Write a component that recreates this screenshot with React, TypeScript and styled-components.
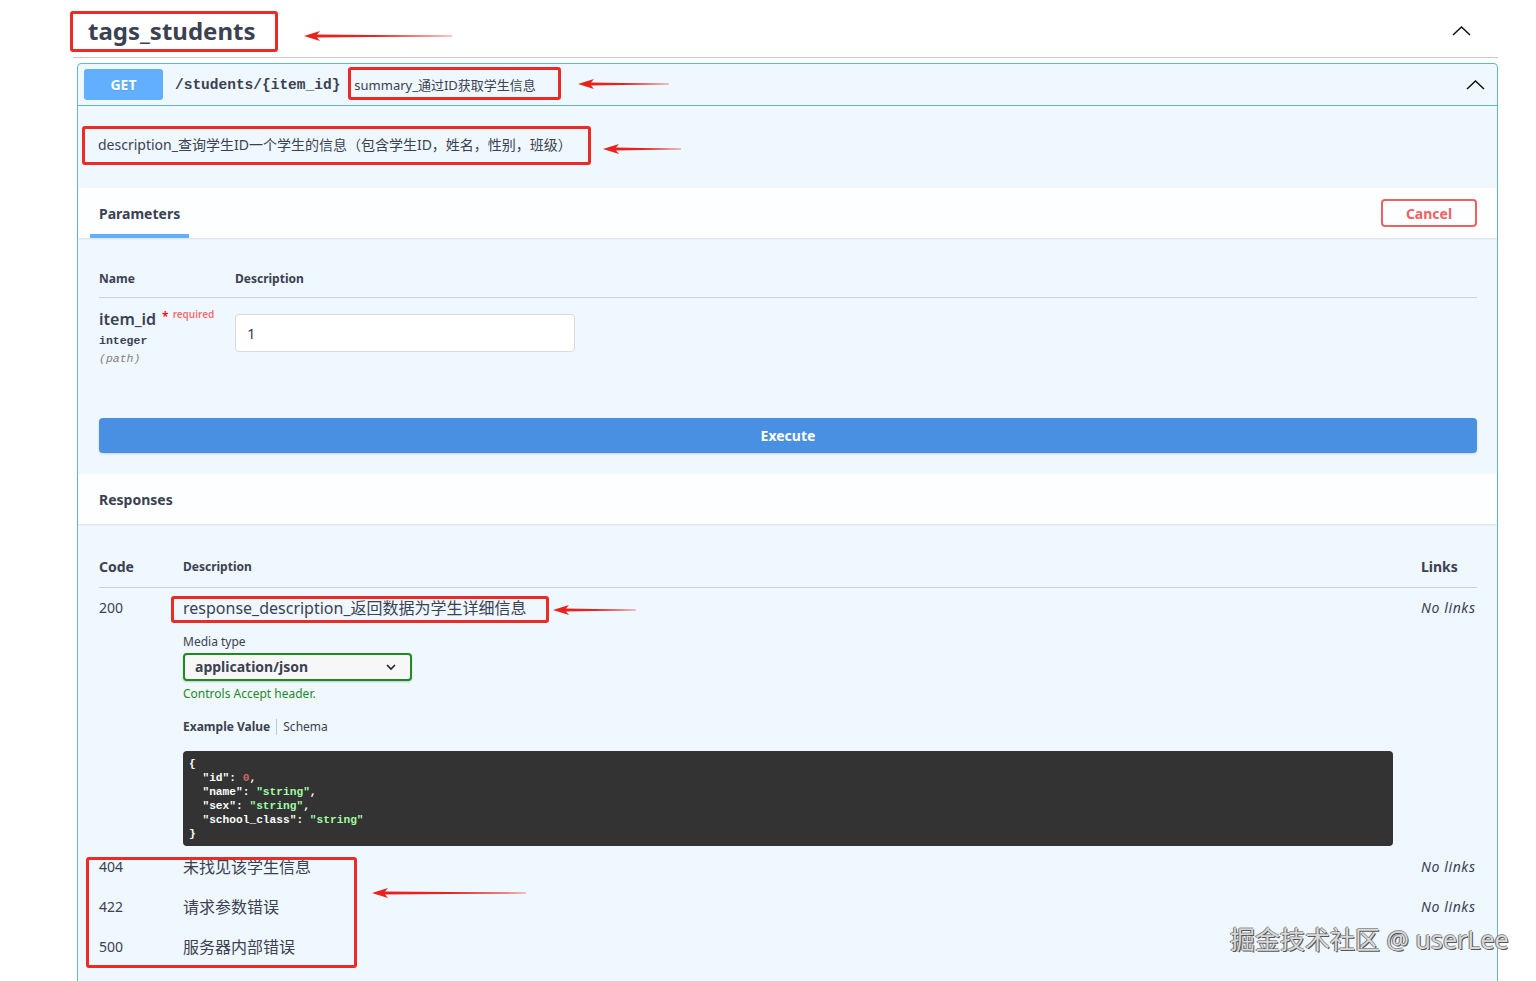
import React from 'react';
import styled, { createGlobalStyle } from 'styled-components';

const GlobalStyle = createGlobalStyle`
  * { box-sizing: border-box; }
  html, body { margin: 0; padding: 0; background: #fff; }
  body {
    font-family: 'Noto Sans', 'Noto Sans CJK SC', sans-serif;
    color: #3b4151;
  }
`;

const mono = `'Liberation Mono', 'DejaVu Sans Mono', monospace`;

const Page = styled.div`
  position: relative;
  min-height: 981px;
  overflow: hidden;
`;

const TagSection = styled.section`
  width: 1425px;
  margin-left: 73px;
`;

const TagHeader = styled.div`
  height: 58px;
  padding: 5px 27px 0 15px;
  display: flex;
  align-items: center;
  justify-content: space-between;
  border-bottom: 1px solid rgba(59, 65, 81, 0.3);
`;

const TagTitle = styled.h3`
  margin: 0;
  font-size: 24px;
  line-height: 32px;
  font-weight: 700;
  color: #3b4151;
`;

const OpBlock = styled.div`
  margin: 5px 0 0 4px;
  border: 1px solid #61affe;
  border-radius: 4px;
  background: #eff7ff;
`;

const Summary = styled.div`
  height: 42px;
  padding: 5px 12px 5px 6px;
  display: flex;
  align-items: center;
  border-bottom: 1px solid #61affe;
`;

const Method = styled.span`
  width: 79px;
  height: 31px;
  border-radius: 3px;
  background: #61affe;
  color: #fff;
  font-size: 14px;
  font-weight: 700;
  display: flex;
  align-items: center;
  justify-content: center;
  text-shadow: 0 1px 0 rgba(0, 0, 0, 0.1);
`;

const Path = styled.span`
  margin-left: 12px;
  font-family: ${mono};
  font-size: 14.5px;
  font-weight: 700;
  color: #3b4151;
`;

const SummaryText = styled.span`
  margin-left: 14px;
  font-size: 13px;
  color: #3b4151;
`;

const ChevronSvg = styled.svg`
  margin-left: auto;
  display: block;
`;

const Chevron = ({ size = 17 }: { size?: number }) => (
  <ChevronSvg width={size + 2} height={10} viewBox={`0 0 ${size + 2} 10`}>
    <polyline points={`1,9 ${(size + 2) / 2},1 ${size + 1},9`} fill="none" stroke="#111" strokeWidth="1.5" />
  </ChevronSvg>
);

const Description = styled.div`
  height: 82px;
  padding: 29px 20px 0;
  font-size: 14px;
  line-height: 20px;
`;

const SectionHeader = styled.div<{ $pl: number }>`
  height: 50px;
  padding: 0 20px 0 ${({ $pl }) => $pl}px;
  display: flex;
  align-items: center;
  justify-content: space-between;
  background: rgba(255, 255, 255, 0.8);
  box-shadow: 0 1px 2px rgba(0, 0, 0, 0.1);
`;

const Tab = styled.div`
  height: 50px;
  padding: 4px 9px 0;
  display: flex;
  align-items: center;
  border-bottom: 4px solid #61affe;
  font-size: 14px;
  font-weight: 700;
`;

const SectionTitle = styled.h4`
  margin: 0;
  font-size: 14px;
  font-weight: 700;
`;

const CancelButton = styled.button`
  width: 96px;
  height: 28px;
  border: 2px solid #f06262;
  border-radius: 4px;
  background: transparent;
  color: #f06262;
  font-family: inherit;
  font-size: 14px;
  font-weight: 700;
  padding: 0;
`;

const SectionBody = styled.div<{ $pb?: number }>`
  padding: 21px 20px ${({ $pb = 0 }) => $pb}px 21px;
`;

const ParamHeadRow = styled.div`
  display: grid;
  grid-template-columns: 136px 1fr;
  padding: 12px 0 11px;
  border-bottom: 1px solid rgba(59, 65, 81, 0.2);
  font-size: 12px;
  line-height: 15px;
  font-weight: 700;
`;

const ParamRow = styled.div`
  display: grid;
  grid-template-columns: 136px 1fr;
  padding: 10px 0;
`;

const ParamName = styled.div`
  font-size: 16px;
  line-height: 22px;
  font-weight: 600;
  white-space: nowrap;
`;

const Required = styled.span`
  color: #f00;
  font-size: 12px;
  margin-left: 6px;
  position: relative;
  top: -4px;
`;

const RequiredLabel = styled.span`
  color: rgba(255, 0, 0, 0.6);
  font-size: 10px;
  font-weight: 600;
  margin-left: 4px;
  position: relative;
  top: -7px;
`;

const ParamType = styled.div<{ $muted?: boolean }>`
  font-family: ${mono};
  font-size: 11.5px;
  line-height: 18px;
  font-weight: ${({ $muted }) => ($muted ? 400 : 700)};
  font-style: ${({ $muted }) => ($muted ? 'italic' : 'normal')};
  color: ${({ $muted }) => ($muted ? '#808080' : '#3b4151')};
`;

const ValueInput = styled.input`
  width: 340px;
  height: 38px;
  margin: 6px 0;
  padding: 0 11px;
  border: 1px solid #d9d9d9;
  border-radius: 4px;
  background: #fff;
  font-family: inherit;
  font-size: 15px;
  color: #3b4151;
`;

const ExecuteWrap = styled.div`
  padding: 40px 20px 21px 21px;
`;

const ExecuteButton = styled.button`
  width: 100%;
  height: 35px;
  border: none;
  border-radius: 4px;
  background: #4990e2;
  color: #fff;
  font-family: inherit;
  font-size: 14px;
  font-weight: 700;
  box-shadow: 0 1px 2px rgba(0, 0, 0, 0.15);
`;

const RespGrid = styled.div<{ $head?: boolean; $pb?: number }>`
  display: grid;
  grid-template-columns: 84px 1fr 56px;
  padding: ${({ $head, $pb = 10 }) => ($head ? '13px 0 11px' : `10px 0 ${$pb}px`)};
  border-bottom: ${({ $head }) => ($head ? '1px solid rgba(59, 65, 81, 0.2)' : 'none')};
  align-items: ${({ $head }) => ($head ? 'center' : 'start')};
`;

const HeadCell = styled.div<{ $small?: boolean }>`
  font-size: ${({ $small }) => ($small ? 12 : 14)}px;
  line-height: 18px;
  font-weight: 700;
`;

const CodeCell = styled.div`
  font-size: 14px;
  line-height: 20px;
`;

const DescCell = styled.div`
  font-size: 16px;
  line-height: 20px;
  min-width: 0;
`;

const NoLinks = styled.div`
  font-size: 14px;
  line-height: 20px;
  font-style: italic;
  letter-spacing: 0.6px;
  white-space: nowrap;
`;

const SmallLabel = styled.div`
  margin-top: 16px;
  font-size: 12px;
  line-height: 16px;
`;

const MediaSelect = styled.div`
  width: 229px;
  height: 28px;
  margin-top: 3px;
  padding: 0 14px 0 10px;
  display: flex;
  align-items: center;
  justify-content: space-between;
  border: 2px solid #1f8a1f;
  border-radius: 4px;
  background: #f7f7f7;
  box-shadow: 0 1px 2px rgba(0, 0, 0, 0.2);
  font-size: 14px;
  font-weight: 700;
  color: #3b4151;
`;

const AcceptNote = styled.div`
  margin-top: 5px;
  font-size: 12px;
  line-height: 16px;
  color: #1f8a1f;
`;

const ExampleTabs = styled.div`
  margin-top: 17px;
  display: flex;
  align-items: center;
  font-size: 12px;
  line-height: 16px;
`;

const ExampleTab = styled.span<{ $active?: boolean }>`
  font-weight: ${({ $active }) => ($active ? 700 : 400)};
  padding: 0 6px 0 0;
  & + & {
    padding-left: 6px;
    border-left: 1px solid rgba(0, 0, 0, 0.2);
  }
`;

const CodeBlock = styled.pre`
  margin: 16px 28px 0 0;
  padding: 6px 6px 5px;
  background: #333;
  border-radius: 4px;
  color: #fff;
  font-family: ${mono};
  font-size: 11.2px;
  line-height: 14px;
  font-weight: 700;
  white-space: pre;
`;

const Num = styled.span`
  color: #d36363;
`;

const Str = styled.span`
  color: #a2fca2;
`;

const RedBox = styled.div<{ $x: number; $y: number; $w: number; $h: number }>`
  position: absolute;
  left: ${({ $x }) => $x}px;
  top: ${({ $y }) => $y}px;
  width: ${({ $w }) => $w}px;
  height: ${({ $h }) => $h}px;
  border: 3px solid #ec2a26;
  border-radius: 3px;
  pointer-events: none;
`;

const ArrowSvg = styled.svg<{ $x: number; $y: number }>`
  position: absolute;
  left: ${({ $x }) => $x}px;
  top: ${({ $y }) => $y - 6}px;
  pointer-events: none;
`;

const Arrow = ({ x, y, w }: { x: number; y: number; w: number }) => (
  <ArrowSvg $x={x} $y={y} width={w} height={12} viewBox={`0 0 ${w} 12`}>
    <polygon
      points={`0,6 16,1 13,4.6 ${w},5.7 ${w},6.3 13,7.4 16,11`}
      fill="#e8231d"
    />
  </ArrowSvg>
);

const Watermark = styled.div`
  position: absolute;
  left: 1230px;
  top: 923px;
  font-size: 25px;
  line-height: 32px;
  color: #d8d8d8;
  white-space: nowrap;
  text-shadow: 1px 1px 0 #555, -1px 0 0 #777, 0 -1px 0 #999;
  pointer-events: none;
`;

const boxes = [
  { x: 70, y: 11, w: 208, h: 41 },
  { x: 348, y: 67, w: 213, h: 33 },
  { x: 82, y: 126, w: 509, h: 39 },
  { x: 171, y: 596, w: 378, h: 27 },
  { x: 86, y: 857, w: 271, h: 111 },
];

const arrows = [
  { x: 304, y: 36, w: 148 },
  { x: 578, y: 84, w: 91 },
  { x: 603, y: 149, w: 78 },
  { x: 553, y: 610, w: 83 },
  { x: 372, y: 893, w: 154 },
];

const otherResponses = [
  { code: '404', text: '未找见该学生信息', links: true },
  { code: '422', text: '请求参数错误', links: true },
  { code: '500', text: '服务器内部错误', links: false },
];

export default function App() {
  return (
    <Page>
      <GlobalStyle />
      <TagSection>
        <TagHeader>
          <TagTitle>tags_students</TagTitle>
          <Chevron />
        </TagHeader>

        <OpBlock>
          <Summary>
            <Method>GET</Method>
            <Path>/students/&#123;item_id&#125;</Path>
            <SummaryText>summary_通过ID获取学生信息</SummaryText>
            <Chevron />
          </Summary>

          <Description>description_查询学生ID一个学生的信息（包含学生ID，姓名，性别，班级）</Description>

          <SectionHeader $pl={12}>
            <Tab>Parameters</Tab>
            <CancelButton>Cancel</CancelButton>
          </SectionHeader>

          <SectionBody>
            <ParamHeadRow>
              <div>Name</div>
              <div>Description</div>
            </ParamHeadRow>
            <ParamRow>
              <div>
                <ParamName>
                  item_id<Required>*</Required>
                  <RequiredLabel>required</RequiredLabel>
                </ParamName>
                <ParamType>integer</ParamType>
                <ParamType $muted>(path)</ParamType>
              </div>
              <div>
                <ValueInput defaultValue="1" />
              </div>
            </ParamRow>
          </SectionBody>

          <ExecuteWrap>
            <ExecuteButton>Execute</ExecuteButton>
          </ExecuteWrap>

          <SectionHeader $pl={21}>
            <SectionTitle>Responses</SectionTitle>
          </SectionHeader>

          <SectionBody $pb={20}>
            <RespGrid $head>
              <HeadCell>Code</HeadCell>
              <HeadCell $small>Description</HeadCell>
              <HeadCell>Links</HeadCell>
            </RespGrid>

            <RespGrid $pb={1}>
              <CodeCell>200</CodeCell>
              <DescCell>
                <div>response_description_返回数据为学生详细信息</div>
                <SmallLabel>Media type</SmallLabel>
                <MediaSelect>
                  application/json
                  <svg width="10" height="7" viewBox="0 0 10 7">
                    <polyline points="1,1 5,5 9,1" fill="none" stroke="#222" strokeWidth="1.6" />
                  </svg>
                </MediaSelect>
                <AcceptNote>Controls Accept header.</AcceptNote>
                <ExampleTabs>
                  <ExampleTab $active>Example Value</ExampleTab>
                  <ExampleTab>Schema</ExampleTab>
                </ExampleTabs>
                <CodeBlock>
                  {'{\n  "id": '}
                  <Num>0</Num>
                  {',\n  "name": '}
                  <Str>"string"</Str>
                  {',\n  "sex": '}
                  <Str>"string"</Str>
                  {',\n  "school_class": '}
                  <Str>"string"</Str>
                  {'\n}'}
                </CodeBlock>
              </DescCell>
              <NoLinks>No links</NoLinks>
            </RespGrid>

            {otherResponses.map((r) => (
              <RespGrid key={r.code}>
                <CodeCell>{r.code}</CodeCell>
                <DescCell>{r.text}</DescCell>
                <NoLinks>{r.links ? 'No links' : ''}</NoLinks>
              </RespGrid>
            ))}
          </SectionBody>
        </OpBlock>
      </TagSection>

      {boxes.map((b, i) => (
        <RedBox key={i} $x={b.x} $y={b.y} $w={b.w} $h={b.h} />
      ))}
      {arrows.map((a, i) => (
        <Arrow key={i} x={a.x} y={a.y} w={a.w} />
      ))}
      <Watermark>掘金技术社区 @ userLee</Watermark>
    </Page>
  );
}
